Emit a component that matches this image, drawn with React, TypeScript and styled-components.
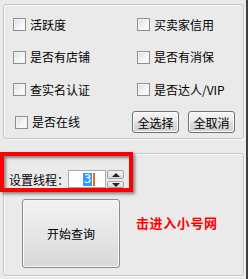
import React from "react";
import styled, { createGlobalStyle } from "styled-components";

const Global = createGlobalStyle`
  html, body { margin: 0; padding: 0; background: #eaeaea; }
  body { font-family: "Noto Sans CJK SC", "Noto Sans", sans-serif; font-size: 12px; color: #000; }
`;

const Window = styled.div`
  position: relative;
  box-sizing: border-box;
  width: 248px;
  height: 279px;
  background: #eaeaea;
  border-right: 2px solid #3f3f3f;
  padding: 4px 0 0 3px;
  overflow: hidden;
`;

const GroupBox = styled.div<{ $h: number; $mt?: number }>`
  box-sizing: border-box;
  width: 241px;
  height: ${(p) => p.$h}px;
  margin-top: ${(p) => p.$mt ?? 0}px;
  border: 1px solid #c6c6c6;
  border-radius: 3px;
  box-shadow: inset 1px 1px 0 #f8f8f8, 1px 1px 0 #f8f8f8;
`;

const OptionGrid = styled.div`
  display: grid;
  grid-template-columns: 119px 1fr;
  grid-template-rows: 33px 32px 33px 32px;
  padding: 3px 0 0 9px;
`;

const Option = styled.label<{ $indent?: number }>`
  display: flex;
  align-items: center;
  gap: 4px;
  padding-left: ${(p) => p.$indent ?? 0}px;
  font-size: 12px;
  line-height: 14px;
  white-space: nowrap;
`;

const Box = styled.span`
  box-sizing: border-box;
  width: 13px;
  height: 13px;
  border: 1px solid #8e8f8f;
  background: linear-gradient(135deg, #dcdcdc 0%, #f6f6f6 60%, #ffffff 100%);
  box-shadow: inset 0 0 0 1px #f4f4f4;
  flex: none;
`;

const ButtonPair = styled.div`
  display: flex;
  align-items: center;
  gap: 9px;
`;

const SmallButton = styled.button`
  box-sizing: border-box;
  width: 47px;
  height: 22px;
  padding: 0;
  border: 1px solid #707070;
  border-radius: 3px;
  background: linear-gradient(#f6f6f6, #e8e8e8 50%, #dcdcdc 51%, #d0d0d0);
  box-shadow: inset 0 0 0 1px #fbfbfb;
  font-family: inherit;
  font-size: 12px;
  color: #000;
`;

const Section = styled.div`
  display: flex;
  flex-direction: column;
  padding: 16px 0 0 5px;
`;

const ThreadRow = styled.div`
  display: flex;
  align-items: center;
  height: 18px;
`;

const Label = styled.span`
  width: 59px;
  font-size: 12px;
  white-space: nowrap;
`;

const NumInput = styled.div`
  box-sizing: border-box;
  width: 38px;
  height: 18px;
  border: 1px solid #a9abb0;
  background: #fff;
  display: flex;
  align-items: center;
  justify-content: center;
  padding-left: 4px;
  font-family: "DejaVu Sans Mono", monospace;
  font-size: 12px;
`;

const Selected = styled.span`
  background: #3399ff;
  color: #fff;
  line-height: 13px;
  padding: 0 0.5px;
`;

const Caret = styled.span`
  width: 2px;
  height: 13px;
  background: #e07010;
  margin-left: 1px;
`;

const Spin = styled.div`
  display: flex;
  flex-direction: column;
  gap: 2px;
  margin-left: 1px;
`;

const SpinBtn = styled.div<{ $down?: boolean }>`
  box-sizing: border-box;
  width: 17px;
  height: ${(p) => (p.$down ? 7 : 9)}px;
  border: 1px solid #a3a3a3;
  border-radius: 2px;
  background: linear-gradient(#f3f3f3, #dadada);
  display: flex;
  align-items: center;
  justify-content: center;
`;

const Tri = styled.span<{ $down?: boolean }>`
  width: 0;
  height: 0;
  border-left: 4px solid transparent;
  border-right: 4px solid transparent;
  ${(p) => (p.$down ? "border-top: 4px solid #222;" : "border-bottom: 4px solid #222;")}
`;

const BottomRow = styled.div`
  display: flex;
  margin-top: 11px;
`;

const StartButton = styled.button`
  box-sizing: border-box;
  width: 98px;
  height: 69px;
  margin-left: 13px;
  padding: 0;
  border: 1px solid #8a8a8a;
  border-radius: 3px;
  background: linear-gradient(#f2f2f2, #e6e6e6 50%, #d8d8d8);
  box-shadow: inset 0 0 0 1px #f7f7f7;
  font-family: inherit;
  font-size: 12px;
  color: #000;
`;

const RedLink = styled.a`
  margin: 15px 0 0 16px;
  color: #ff0000;
  font-weight: bold;
  font-size: 13px;
  line-height: 18px;
  letter-spacing: 0.6px;
  text-decoration: none;
  white-space: nowrap;
`;

const Annotation = styled.div`
  position: absolute;
  left: 0;
  top: 152px;
  box-sizing: border-box;
  width: 133px;
  height: 40px;
  border: 4px solid #ff0000;
  box-shadow: 2px 2px 3px rgba(0, 0, 0, 0.45), inset 2px 2px 3px rgba(0, 0, 0, 0.45);
  pointer-events: none;
`;

const options: { text: string; indent?: number }[] = [
  { text: "活跃度" },
  { text: "买卖家信用", indent: 5 },
  { text: "是否有店铺" },
  { text: "是否有消保", indent: 5 },
  { text: "查实名认证" },
  { text: "是否达人/VIP", indent: 5 },
  { text: "是否在线", indent: 2 },
];

export default function App() {
  return (
    <>
      <Global />
      <Window>
        <GroupBox $h={135}>
          <OptionGrid>
            {options.map((o) => (
              <Option key={o.text} $indent={o.indent}>
                <Box />
                {o.text}
              </Option>
            ))}
            <ButtonPair>
              <SmallButton>全选择</SmallButton>
              <SmallButton>全取消</SmallButton>
            </ButtonPair>
          </OptionGrid>
        </GroupBox>
        <GroupBox $h={123} $mt={14}>
          <Section>
            <ThreadRow>
              <Label>设置线程：</Label>
              <NumInput>
                <Selected>3</Selected>
                <Caret />
              </NumInput>
              <Spin>
                <SpinBtn>
                  <Tri />
                </SpinBtn>
                <SpinBtn $down>
                  <Tri $down />
                </SpinBtn>
              </Spin>
            </ThreadRow>
            <BottomRow>
              <StartButton>开始查询</StartButton>
              <RedLink href="#">击进入小号网</RedLink>
            </BottomRow>
          </Section>
        </GroupBox>
        <Annotation />
      </Window>
    </>
  );
}
